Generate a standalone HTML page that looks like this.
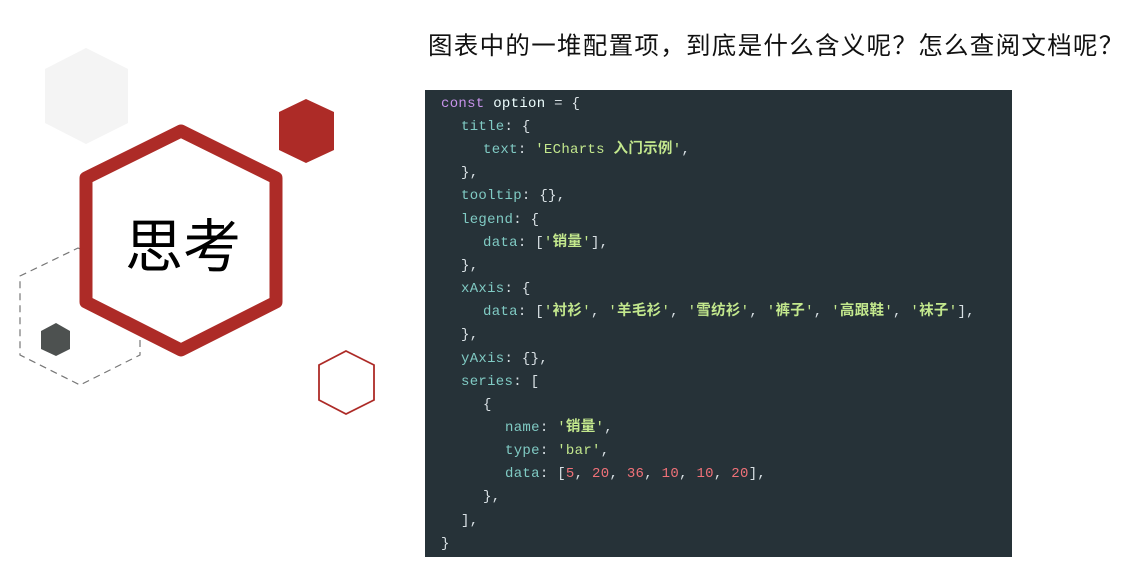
<!DOCTYPE html>
<html><head><meta charset="utf-8"><style>
body{margin:0;width:1134px;height:565px;background:#fff;position:relative;overflow:hidden;font-family:"Liberation Sans","Noto Sans CJK SC",sans-serif}
.t{position:absolute;left:428px;top:32px;font-size:24.5px;letter-spacing:1.3px;white-space:nowrap;color:#111;line-height:30px}
.code{position:absolute;left:425px;top:90px;width:587px;height:467px;background:#263238}
.l{position:absolute;white-space:pre;font-family:"Liberation Mono","Noto Sans CJK SC",monospace;font-size:14px;letter-spacing:0.3px;line-height:18px;color:#d8e0e4}
.k{color:#80cbc4}.s{color:#c3e88d;}.s b{font-weight:bold;font-size:14.5px}.n{color:#f07178}.c{color:#c792ea}.w{color:#eeffff}
.big{position:absolute;left:125px;top:207px;font-size:58px;font-family:"Noto Sans CJK SC",sans-serif;color:#000;line-height:70px}
</style></head><body>
<svg width="420" height="565" style="position:absolute;left:0;top:0">
<polygon points="86,48 128,69 128,123 86,144 45,123 45,69" fill="#f4f4f4"/>
<polygon points="306,99 334,112 334,150 306,163 279,150 279,112" fill="#ad2b27"/>
<polygon points="78,248 140,276 140,355 80,385 20,355 20,276" fill="none" stroke="#777" stroke-width="1.2" stroke-dasharray="7,5"/>
<polygon points="56,323 70,331 70,349 56,356 41,349 41,331" fill="#4d5150"/>
<polygon points="181,131 276,178 276,302 181,350 86,302 86,178" fill="#fff" stroke="#ad2b27" stroke-width="13" stroke-linejoin="round"/>
<polygon points="346,351 374,365 374,400 346,414 319,400 319,365" fill="none" stroke="#ad2b27" stroke-width="1.8"/>
</svg>
<div class="big">思考</div>
<div class="t">图表中的一堆配置项，到底是什么含义呢？怎么查阅文档呢？</div>
<div class="code">
<div class="l" style="left:16px;top:5px"><span class="c">const</span> <span class="w">option</span> = {</div>
<div class="l" style="left:36px;top:28px"><span class="k">title</span>: {</div>
<div class="l" style="left:58px;top:51px"><span class="k">text</span>: <span class="s">'ECharts <b>入门示例</b>'</span>,</div>
<div class="l" style="left:36px;top:74px">},</div>
<div class="l" style="left:36px;top:97px"><span class="k">tooltip</span>: {},</div>
<div class="l" style="left:36px;top:121px"><span class="k">legend</span>: {</div>
<div class="l" style="left:58px;top:144px"><span class="k">data</span>: [<span class="s">'<b>销量</b>'</span>],</div>
<div class="l" style="left:36px;top:167px">},</div>
<div class="l" style="left:36px;top:190px"><span class="k">xAxis</span>: {</div>
<div class="l" style="left:58px;top:213px"><span class="k">data</span>: [<span class="s">'<b>衬衫</b>'</span>, <span class="s">'<b>羊毛衫</b>'</span>, <span class="s">'<b>雪纺衫</b>'</span>, <span class="s">'<b>裤子</b>'</span>, <span class="s">'<b>高跟鞋</b>'</span>, <span class="s">'<b>袜子</b>'</span>],</div>
<div class="l" style="left:36px;top:236px">},</div>
<div class="l" style="left:36px;top:260px"><span class="k">yAxis</span>: {},</div>
<div class="l" style="left:36px;top:283px"><span class="k">series</span>: [</div>
<div class="l" style="left:58px;top:306px">{</div>
<div class="l" style="left:80px;top:329px"><span class="k">name</span>: <span class="s">'<b>销量</b>'</span>,</div>
<div class="l" style="left:80px;top:352px"><span class="k">type</span>: <span class="s">'bar'</span>,</div>
<div class="l" style="left:80px;top:375px"><span class="k">data</span>: [<span class="n">5</span>, <span class="n">20</span>, <span class="n">36</span>, <span class="n">10</span>, <span class="n">10</span>, <span class="n">20</span>],</div>
<div class="l" style="left:58px;top:398px">},</div>
<div class="l" style="left:36px;top:422px">],</div>
<div class="l" style="left:16px;top:445px">}</div>
</div>
</body></html>
